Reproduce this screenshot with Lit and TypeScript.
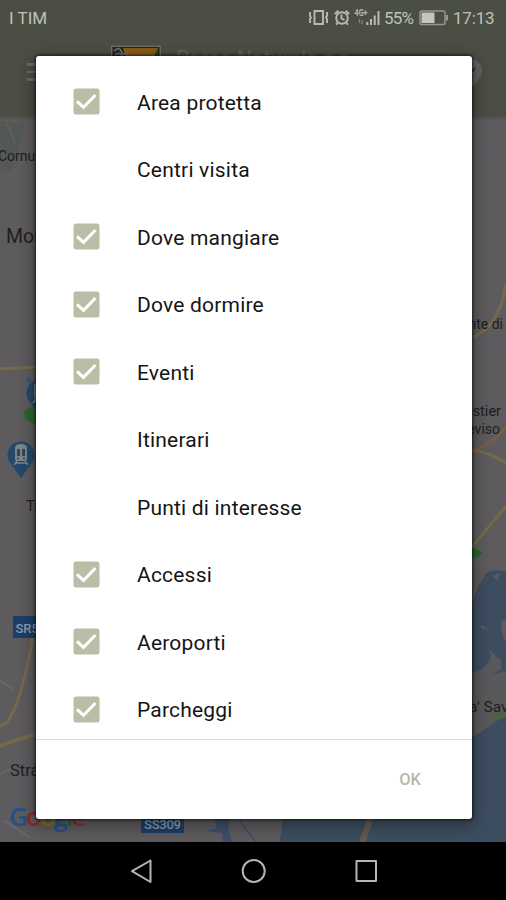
import { LitElement, html, svg, css } from "lit";
import { customElement, state } from "lit/decorators.js";

interface Layer {
  name: string;
  on: boolean;
}

@customElement("status-bar")
class StatusBar extends LitElement {
  static styles = css`
    :host {
      display: flex;
      justify-content: space-between;
      height: 36px;
      box-sizing: border-box;
      padding: 0 11px 0 9px;
      align-items: center;
      color: #c0c1bb;
      font: 17px/36px Roboto, sans-serif;
    }
    .carrier { font-size: 17px; }
    .right { display: flex; align-items: center; height: 36px; }
    .icons { display: block; width: 74px; height: 36px; margin-right: 4px; }
    .pct { width: 31px; font-size: 17px; letter-spacing: -0.8px; white-space: nowrap; }
    .battery { display: block; width: 29px; height: 36px; margin: 0 5px 0 4px; }
    .time { width: 42px; letter-spacing: -0.2px; white-space: nowrap; }
    .tiny { font: 700 8.5px Roboto, sans-serif; fill: #b9bab4; }
  `;
  render() {
    return html`
      <span class="carrier">I TIM</span>
      <div class="right">
        <svg class="icons" viewBox="306 0 74 36" fill="none" stroke="#b9bab4" stroke-width="1.900">
          <path d="M314.500 11h8.500v13h-8.500zM310 12v4l1 1.500-1 1.500v4M327 12v4l-1 1.500 1 1.500v4" />
          <circle cx="342" cy="18" r="5.800" />
          <path d="M341.500 14.500v4l3 1.500M334.800 14l3.500-3.300M349.200 14l-3.500-3.300M337.500 23l-1.500 1.700M346.500 23l1.500 1.700" />
          <text class="tiny" x="354.500" y="16" stroke="none" textLength="13" lengthAdjust="spacingAndGlyphs">4G+</text>
          <path stroke="#85867f" stroke-width="1.200" d="M359.500 19v4M362 20v4" />
          <path stroke-width="2" d="M367.300 22v3M371 19v6M374.700 15.500v9.500M378.500 11v14" />
        </svg>
        <span class="pct">55%</span>
        <svg class="battery" viewBox="420 0 29 36" fill="none" stroke="#96978f" stroke-width="1.500">
          <rect x="421" y="11" width="25" height="13.500" rx="2" />
          <path stroke-width="2" d="M448 15v5.500" />
          <rect x="422.500" y="12.500" width="13" height="10.500" fill="#c5c6c0" stroke="none" />
        </svg>
        <span class="time">17:13</span>
      </div>
    `;
  }
}

@customElement("park-header")
class ParkHeader extends LitElement {
  static styles = css`
    :host { display: flex; height: 78px; padding-left: 27px; box-sizing: border-box; }
    .menu { width: 24px; margin-top: 27px; display: flex; flex-direction: column; gap: 5px; }
    .line { height: 2.500px; background: #696b66; }
    .logo { width: 50px; height: 48px; margin: 9px 0 0 60px; }
    .name {
      margin: 7px 0 0 15px;
      width: 260px;
      color: #61635a;
      font: 21px/30px Roboto, sans-serif;
      letter-spacing: 0.2px;
      white-space: nowrap;
    }
    .pin { width: 28px; height: 34px; margin: 21px 0 0 20px; }
  `;
  render() {
    return html`
      <div class="menu"><div class="line"></div><div class="line"></div><div class="line"></div></div>
      <svg class="logo" viewBox="0 0 50 48">
        <rect x=".7" y="1.200" width="48.500" height="46" fill="#262820" stroke="#74766f" stroke-width="1.300" />
        <path d="M12 3h35L43 13H15z" fill="#875c19" />
        <path d="M47 3v10h-5z" fill="#29471c" />
        <path d="M3 6q5-5 7 0t7 2M4 10q5-4 8 2" fill="none" stroke="#777971" stroke-width="1.500" />
      </svg>
      <div class="name">Parco Naturale e r</div>
      <svg class="pin" viewBox="0 0 28 34">
        <path d="M14 2a12 12 0 0 1 12 12q0 7-12 18Q2 21 2 14A12 12 0 0 1 14 2z" fill="#626462" />
        <path d="M15 13l5-3-2 5z" fill="#343732" />
      </svg>
    `;
  }
}

@customElement("area-map")
class AreaMap extends LitElement {
  static styles = css`
    :host { display: block; height: 728px; background: #5d5b5d; }
    svg { display: block; width: 506px; height: 728px; }
    .label { font-family: Roboto, sans-serif; fill: #20201f; }
    .shield { font: 500 13px Roboto, sans-serif; fill: #8b9bae; }
    .brand { font: 600 26px "Open Sans", sans-serif; }
  `;
  render() {
    const station = (x: number, y: number) => svg`
      <g transform="translate(${x} ${y})">
        <path d="M0 23L-10 9A13.500 13.500 0 1 1 10 9z" fill="#24496b" />
        <path d="M-6-7Q-6-11 0-11T6-7V4Q6 6 4 6H-4Q-6 6-6 4z" fill="#7d8589" />
        <path d="M-4-6h3v7h-3zM1-6h3v7H1z" fill="#24496b" />
        <path d="M-4 6l-3 4M4 6l3 4M-5 8H5" stroke="#7d8589" stroke-width="1.500" />
        <circle cx="-3" cy="3.500" r="1" fill="#24496b" /><circle cx="3" cy="3.500" r="1" fill="#24496b" />
      </g>`;
    return html`
      <svg viewBox="0 114 506 728">
        <defs>
          <linearGradient id="top" x1="0" y1="0" x2="0" y2="1">
            <stop offset="0" stop-color="#474943" /><stop offset="1" stop-color="#5d5b5d" />
          </linearGradient>
        </defs>
        <path d="M0 122h25l-5 22-8 26-12 4z" fill="#555956" />
        <path d="M7 124l8 18" stroke="#666965" fill="none" />
        <rect y="114" width="506" height="7" fill="url(#top)" />
        <g fill="none" stroke="#76694a" stroke-width="3">
          <path d="M0 369L36 367" />
          <path d="M33 636Q24 690 12 714Q8 724 0 726" />
          <path d="M0 746Q18 739 36 734" stroke-width="4" />
          <path d="M470 339Q500 327 506 284" />
          <path d="M470 452Q492 445 506 427" stroke="#765f45" />
          <path d="M470 450Q490 452 506 463M506 506L472 547" />
        </g>
        <g fill="none" stroke="#505f73" stroke-width="1.500">
          <path d="M12 804q8-4 14-14l10 5M488 153l7-1M491 334l9 9M472 336v22" />
          <path d="M0 774L12 768M0 681l14 8M4 820l26 18" stroke="#6b6a6c" />
        </g>
        <path d="M470 612L481 575 495 570 506 571V842H280V740H470z" fill="#3d4d60" />
        <path d="M470 572h16q-4 14-16 20z" fill="#5a595b" />
        <path d="M470 674q18-5 21-18l-2-8 7 9 5 2v10l-10 6 15-4V715L470 739z" fill="#59595b" />
        <path d="M502 620q-3 10 4 22v-22zM482 625l8 5-9-2zM493 576l7-3-3 8z" fill="#5b5a5c" />
        <path d="M492 716q7-4 14-4v5l-14 5z" fill="#4c6140" />
        <path d="M213 815h18l-3 13 4 14h-9l-1-9-17-2 12-3z" fill="#3d5069" />
        <path d="M239 820l17 22M255 818h10" fill="none" stroke="#3d5069" stroke-width="1.500" />
        <path d="M278 815h4v14l-3 13h-4z" fill="#5d5b5d" />
        <path d="M367 819h6l-7 23h-7z" fill="#645b4f" />
        <circle cx="29" cy="380" r="2.500" fill="#31587c" />
        ${station(40, 393)}
        <path d="M24 413q2-6 10-6l5 3v15l-7-2-7-4z" fill="#2c652f" />
        ${station(21, 455)}
        <path d="M471 547l6 3 6 3-7 5-5-1z" fill="#206b28" />
        <rect x="13" y="616" width="30" height="22" fill="#1c3e68" />
        <text class="shield" x="15.500" y="633">SR53</text>
        <rect x="141" y="812" width="43" height="21" fill="#1c3e68" />
        <text class="shield" x="144" y="829" textLength="37">SS309</text>
        <text class="label" x="-2" y="161" font-size="14">Cornuda</text>
        <text class="label" x="6" y="243" font-size="19.500">Montebelluna</text>
        <text class="label" x="26" y="511" font-size="15">Tre</text>
        <text class="label" x="10" y="776" font-size="16.500">Stra</text>
        <text class="label" x="503" y="329" font-size="14" text-anchor="end">Ponte di</text>
        <text class="label" x="501" y="416" font-size="14.500" text-anchor="end">Carbonera-Castier</text>
        <text class="label" x="500" y="434" font-size="14" text-anchor="end">Treviso</text>
        <text class="label" x="469" y="712" font-size="15.500">a' Sav</text>
        <text class="brand" x="9" y="826" textLength="77"><tspan fill="#244f8d">G</tspan><tspan fill="#8c2b28">o</tspan><tspan fill="#8c6c13">o</tspan><tspan fill="#244f8d">g</tspan><tspan fill="#1f6834">l</tspan><tspan fill="#8c2b28">e</tspan></text>
      </svg>
    `;
  }
}

@customElement("layer-dialog")
class LayerDialog extends LitElement {
  @state() private layers: Layer[] = [
    { name: "Area protetta", on: true },
    { name: "Centri visita", on: false },
    { name: "Dove mangiare", on: true },
    { name: "Dove dormire", on: true },
    { name: "Eventi", on: true },
    { name: "Itinerari", on: false },
    { name: "Punti di interesse", on: false },
    { name: "Accessi", on: true },
    { name: "Aeroporti", on: true },
    { name: "Parcheggi", on: true },
  ];
  static styles = css`
    :host {
      display: flex;
      flex-direction: column;
      width: 435.500px;
      height: 763px;
      background: #fff;
      border-radius: 3px;
      box-shadow: 0 0 3px 1px rgba(0, 0, 0, 0.6), 0 5px 16px 3px rgba(0, 0, 0, 0.32);
      font-family: Roboto, sans-serif;
      overflow: hidden;
    }
    .list { height: 684px; box-sizing: border-box; padding-top: 12px; overflow: hidden; border-bottom: 1.500px solid #dcdcdc; }
    .row { display: flex; align-items: center; height: 67.500px; padding-left: 37px; cursor: pointer; }
    .box { width: 27px; height: 27px; margin-right: 37px; flex: none; }
    .name { font-size: 21px; line-height: 30px; color: #151515; letter-spacing: 0.2px; padding-top: 2px; }
    .actions { flex: 1; display: flex; align-items: center; justify-content: flex-end; padding-right: 50.500px; }
    .ok { border: 0; background: none; padding: 0; font: 500 16.500px Roboto, sans-serif; color: #b7b9a1; }
  `;
  private toggle(i: number) {
    this.layers = this.layers.map((l, n) => (n === i ? { ...l, on: !l.on } : l));
  }
  render() {
    return html`
      <div class="list">
        ${this.layers.map(
          (l, i) => html`
            <div class="row" @click=${() => this.toggle(i)}>
              <svg class="box" viewBox="0 0 27 27">
                ${l.on
                  ? svg`<rect x=".5" y=".5" width="26" height="26" rx="2.500" fill="#babea6" />
                      <path d="M4 13.300l6.500 6L22.500 7" fill="none" stroke="#fff" stroke-width="3" />`
                  : null}
              </svg>
              <span class="name">${l.name}</span>
            </div>
          `
        )}
      </div>
      <div class="actions"><button class="ok">OK</button></div>
    `;
  }
}

@customElement("app-root")
class AppRoot extends LitElement {
  static styles = css`
    :host { display: block; width: 506px; height: 900px; position: relative; overflow: hidden; }
    .top { background: #4b4e43; height: 114px; }
    .overlay { position: absolute; inset: 56px 0 auto 36px; }
    .nav { display: block; width: 506px; height: 58px; background: #000; }
  `;
  render() {
    return html`
      <div class="top">
        <status-bar></status-bar>
        <park-header></park-header>
      </div>
      <area-map></area-map>
      <svg class="nav" viewBox="0 842 506 58" fill="none" stroke="#b5b5b5" stroke-width="2" stroke-linejoin="round">
        <path d="M150.500 860.500v21.500L132 871.200z" />
        <circle cx="253.700" cy="871" r="11" />
        <rect x="356.500" y="861" width="19.500" height="20" />
      </svg>
      <div class="overlay"><layer-dialog></layer-dialog></div>
    `;
  }
}
